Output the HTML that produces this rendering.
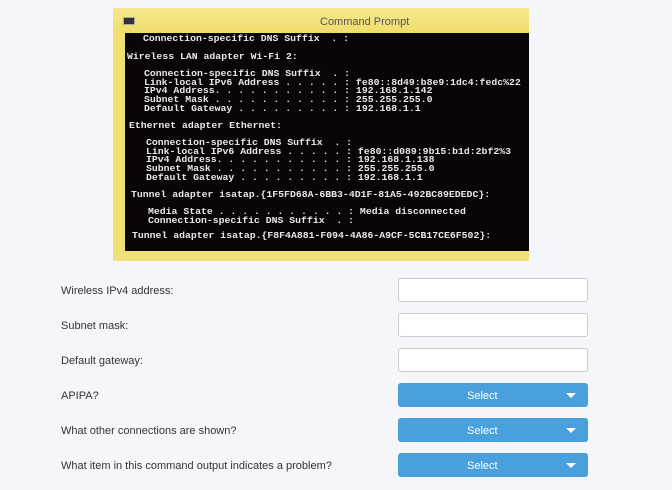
<!DOCTYPE html>
<html><head><style>
body{margin:0;width:672px;height:490px;background:#f5f6fa;font-family:"Liberation Sans",sans-serif;position:relative;overflow:hidden}
.img{position:absolute;left:113px;top:8px;width:416px;height:253px;background:#f1e070;}
.title{position:absolute;left:0;top:0;width:416px;height:25px;background:linear-gradient(#f6e98e,#f0dc6a);}
.title span{position:absolute;left:207px;top:8px;font-size:11px;color:#555}
.ic{position:absolute;left:10px;top:9px;width:10px;height:6px;background:#333;border:1px solid #aaa}
.term{position:absolute;left:12px;top:25px;width:404px;height:218px;background:#0a0606;}
.t{position:absolute;font-family:"Liberation Mono",monospace;font-weight:bold;font-size:9px;color:#e8e8e8;white-space:pre;line-height:8.7px;transform:scaleX(1.09);transform-origin:left}
.bot{position:absolute;left:0;top:243px;width:416px;height:10px;background:#efe07a}
.lbl{position:absolute;left:61px;font-size:11px;color:#333}
.in{position:absolute;left:398px;width:188px;height:22px;background:#fff;border:1px solid #ccc;border-radius:3px}
.sel{position:absolute;left:398px;width:190px;height:24px;background:#4aa0dd;border-radius:3px;color:#fff;font-size:11px}
.sel span{position:absolute;left:69px;top:7px}
.sel i{position:absolute;right:12px;top:10px;border-left:5px solid transparent;border-right:5px solid transparent;border-top:5px solid #fff}
</style></head><body>
<div class="img">
<div class="title"><div class="ic"></div><span>Command Prompt</span></div>
<div class="term"></div>
<div class="bot"></div>
</div>
<div class="t" style="left:143px;top:35px">Connection-specific DNS Suffix  . :</div>
<div class="t" style="left:127px;top:53px">Wireless LAN adapter Wi-Fi 2:</div>
<div class="t" style="left:144px;top:70px">Connection-specific DNS Suffix  . :
Link-local IPv6 Address . . . . . : fe80::8d49:b8e9:1dc4:fedc%22
IPv4 Address. . . . . . . . . . . : 192.168.1.142
Subnet Mask . . . . . . . . . . . : 255.255.255.0
Default Gateway . . . . . . . . . : 192.168.1.1</div>
<div class="t" style="left:129px;top:122px">Ethernet adapter Ethernet:</div>
<div class="t" style="left:146px;top:139px">Connection-specific DNS Suffix  . :
Link-local IPv6 Address . . . . . : fe80::d089:9b15:b1d:2bf2%3
IPv4 Address. . . . . . . . . . . : 192.168.1.138
Subnet Mask . . . . . . . . . . . : 255.255.255.0
Default Gateway . . . . . . . . . : 192.168.1.1</div>
<div class="t" style="left:131px;top:191px">Tunnel adapter isatap.{1F5FD68A-6BB3-4D1F-81A5-492BC89EDEDC}:</div>
<div class="t" style="left:148px;top:208px">Media State . . . . . . . . . . . : Media disconnected
Connection-specific DNS Suffix  . :</div>
<div class="t" style="left:132px;top:232px">Tunnel adapter isatap.{F8F4A881-F094-4A86-A9CF-5CB17CE6F502}:</div>

<div class="lbl" style="top:285px">Wireless IPv4 address:</div>
<div class="lbl" style="top:320px">Subnet mask:</div>
<div class="lbl" style="top:355px">Default gateway:</div>
<div class="lbl" style="top:390px">APIPA?</div>
<div class="lbl" style="top:425px">What other connections are shown?</div>
<div class="lbl" style="top:460px">What item in this command output indicates a problem?</div>
<div class="in" style="top:278px"></div>
<div class="in" style="top:313px"></div>
<div class="in" style="top:348px"></div>
<div class="sel" style="top:383px"><span>Select</span><i></i></div>
<div class="sel" style="top:418px"><span>Select</span><i></i></div>
<div class="sel" style="top:453px"><span>Select</span><i></i></div>
</body></html>
